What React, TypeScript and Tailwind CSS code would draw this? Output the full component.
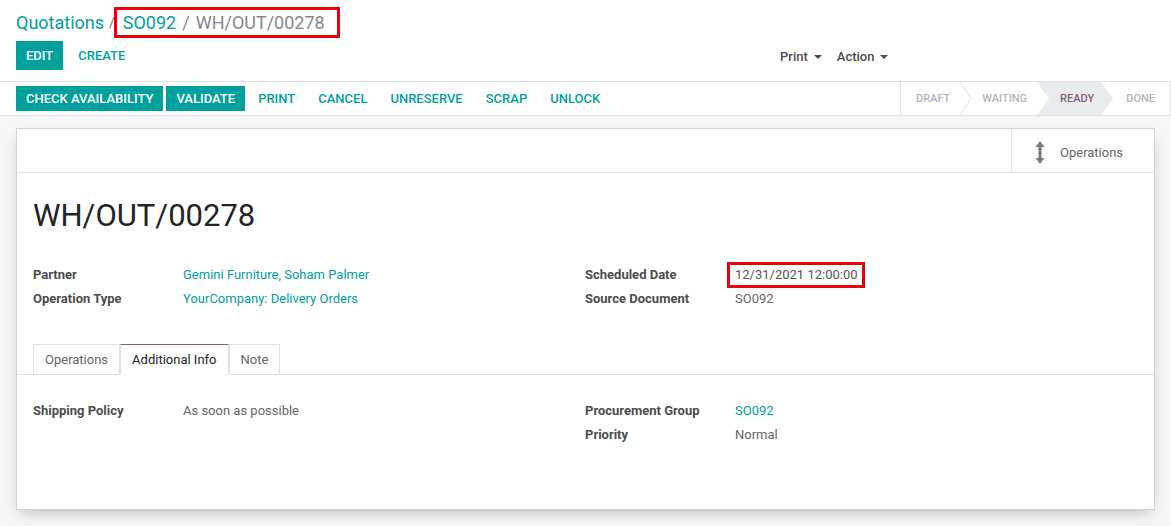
import React from "react";

const teal = "text-[#00A09D]";

function Caret() {
  return (
    <svg width="8" height="4" viewBox="0 0 8 4" className="ml-[6px]">
      <polygon points="0,0 8,0 4,4" fill="#4c4c4c" />
    </svg>
  );
}

function Field({ label, value, link, boxed }: { label: string; value: string; link?: boolean; boxed?: boolean }) {
  return (
    <div className="flex h-[24px] items-center">
      <div className="w-[150px] shrink-0 font-bold text-[#4c4c4c]">{label}</div>
      {boxed ? (
        <span className="-ml-[8px] inline-flex h-[26px] items-center border-[3px] border-[#e8000b] pl-[5px] pr-[4px] text-[#555]">
          {value}
        </span>
      ) : (
        <div className={link ? teal : "text-[#666]"}>{value}</div>
      )}
    </div>
  );
}

export default function App() {
  return (
    <div
      className="h-[526px] w-[1171px] overflow-hidden bg-[#f7f7f7] text-[13px] leading-normal"
      style={{ fontFamily: "Roboto, 'Noto Sans', Arial, sans-serif" }}
    >
      {/* Control panel */}
      <div className="bg-white">
        <div className="flex h-[41px] items-start pl-4 pt-[7px] text-[18px] leading-[25px]">
          <span className={teal + " pt-[3px]"}>Quotations</span>
          <span className="pl-[5px] pr-0 pt-[4px] text-[14px] text-[#777]">/</span>
          <span className="-ml-[1px] flex h-[31px] items-center border-[3px] border-[#e8000b] pl-[6px] pr-[12px]">
            <span className={teal}>SO092</span>
            <span className="px-[6px] text-[#888]">/</span>
            <span className="text-[#888]">WH/OUT/00278</span>
          </span>
        </div>
        <div className="grid h-[40px] grid-cols-[780px_1fr] items-start">
          <div className="flex gap-[5px] pl-4">
            <button className="h-[29px] bg-[#00A09D] px-[10px] font-medium text-white">EDIT</button>
            <button className={"h-[29px] px-[10px] font-medium " + teal}>CREATE</button>
          </div>
          <div className="flex h-[30px] items-center pt-[1px] text-[#4c4c4c]">
            <span className="flex items-center font-medium">
              Print
              <Caret />
            </span>
            <span className="ml-[15px] flex items-center font-medium">
              Action
              <Caret />
            </span>
          </div>
        </div>
        {/* Status bar */}
        <div className="flex h-[35px] items-center border-y border-[#dee2e6]">
          <div className="flex items-center gap-[3px] pl-4">
            <button className="h-[25px] bg-[#00A09D] px-[10px] font-medium text-white">CHECK AVAILABILITY</button>
            <button className="h-[25px] bg-[#00A09D] px-[10px] font-medium text-white">VALIDATE</button>
            <button className={"h-[25px] px-[10px] font-medium " + teal}>PRINT</button>
            <button className={"h-[25px] px-[10px] font-medium " + teal}>CANCEL</button>
            <button className={"h-[25px] px-[10px] font-medium " + teal}>UNRESERVE</button>
            <button className={"h-[25px] px-[10px] font-medium " + teal}>SCRAP</button>
            <button className={"h-[25px] px-[10px] font-medium " + teal}>UNLOCK</button>
          </div>
          <div className="ml-auto flex h-full w-[271px] items-stretch border-x border-[#dee2e6] text-[11px] font-medium text-[#b0b5bd]">
            <div className="flex items-center pl-[15px] pr-[10px] pt-[1px]">DRAFT</div>
            <svg width="12" height="33" viewBox="0 0 12 33" className="shrink-0">
              <polyline points="0,0 11,16.5 0,33" fill="none" stroke="#dee2e6" strokeWidth="1" />
            </svg>
            <div className="flex items-center pl-[10px] pr-[10px] pt-[1px]">WAITING</div>
            <div className="flex items-center bg-[#e9ecef] pl-[23px] pr-[19px] pt-[1px] text-[#875A7B] [clip-path:polygon(0_0,calc(100%-12px)_0,100%_50%,calc(100%-12px)_100%,0_100%,12px_50%)]">
              READY
            </div>
            <div className="flex items-center pl-[13px] pt-[1px]">DONE</div>
          </div>
        </div>
      </div>

      {/* Sheet */}
      <div className="px-4 pt-[12px]">
        <div className="h-[382px] border border-[#ced4da] bg-white shadow-[0_6px_14px_-4px_rgba(0,0,0,0.25)]">
          <div className="flex h-[44px] justify-end border-b border-[#dee2e6]">
            <div className="flex w-[143px] items-center gap-[15px] border-l border-[#dee2e6] pl-[23px] pt-[4px] text-[#666]">
              <svg width="10" height="23" viewBox="0 0 10 23" className="shrink-0">
                <polygon points="5,0 9.5,6 0.5,6" fill="#7a7a7a" />
                <rect x="3.5" y="5" width="3" height="13" fill="#7a7a7a" />
                <polygon points="0.5,17 9.5,17 5,23" fill="#7a7a7a" />
              </svg>
              <span>Operations</span>
            </div>
          </div>

          <div className="px-4 pt-[24px]">
            <h1 className="text-[31px] leading-[37px] text-[#212529]">WH/OUT/00278</h1>
            <div className="mt-[29px] grid grid-cols-[552px_1fr]">
              <div>
                <Field label="Partner" value="Gemini Furniture, Soham Palmer" link />
                <Field label="Operation Type" value="YourCompany: Delivery Orders" link />
              </div>
              <div>
                <Field label="Scheduled Date" value="12/31/2021 12:00:00" boxed />
                <Field label="Source Document" value="SO092" />
              </div>
            </div>
          </div>

          {/* Tabs */}
          <div className="mt-[33px] flex border-b border-[#dee2e6] pl-4">
            <div className="-mb-px flex h-[31px] items-center border border-[#dee2e6] px-[11px] text-[#666]">Operations</div>
            <div className="-mb-px flex h-[31px] items-center border-x border-b border-t border-x-[#dee2e6] border-b-white border-t-[#875A7B] px-[11px] text-[#212529]">
              Additional Info
            </div>
            <div className="-mb-px flex h-[31px] items-center border border-[#dee2e6] px-[11px] text-[#666]">Note</div>
          </div>

          <div className="px-4 pt-[24px]">
            <div className="grid grid-cols-[552px_1fr]">
              <div>
                <Field label="Shipping Policy" value="As soon as possible" />
              </div>
              <div>
                <Field label="Procurement Group" value="SO092" link />
                <Field label="Priority" value="Normal" />
              </div>
            </div>
          </div>
        </div>
      </div>
    </div>
  );
}
